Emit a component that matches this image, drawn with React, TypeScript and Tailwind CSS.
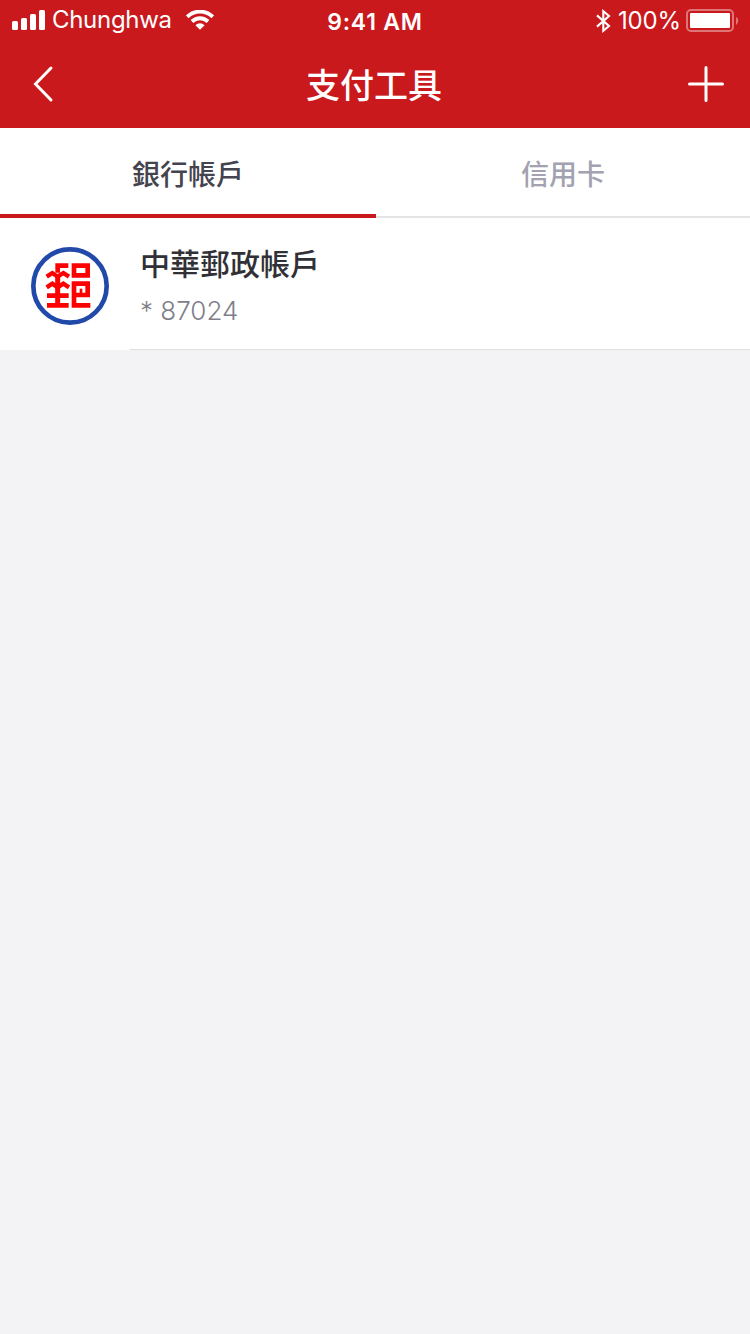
import React from "react";

function Signal() {
  return (
    <svg width="34" height="20" viewBox="0 0 34 20" fill="#fff" className="shrink-0">
      <rect x="0" y="11" width="6" height="9" rx="1.5" />
      <rect x="9" y="8" width="6" height="12" rx="1.5" />
      <rect x="18" y="4" width="6" height="16" rx="1.5" />
      <rect x="27" y="0" width="6" height="20" rx="1.5" />
    </svg>
  );
}

function Wifi() {
  return (
    <svg width="28" height="20" viewBox="0 0 28 20" className="shrink-0">
      <g fill="none" stroke="#fff" strokeWidth="3.9">
        <path d="M1.3 6.8A18.2 18.2 0 0 1 26.7 6.8" />
        <path d="M6 11.5A11.5 11.5 0 0 1 22 11.5" />
      </g>
      <path d="M9.4 15.2a6.6 6.6 0 0 1 9.2 0L14 19.8Z" fill="#fff" />
    </svg>
  );
}

function Bluetooth() {
  return (
    <svg width="16" height="24" viewBox="0 0 16 24" fill="none" stroke="#fff" strokeWidth="2.1" className="shrink-0">
      <path d="M2 6.4 14 17 8.3 21.8V2.2l5.7 4.8L2 17.6" />
    </svg>
  );
}

function Battery() {
  return (
    <svg width="54" height="24" viewBox="0 0 54 24" className="shrink-0">
      <rect x="1" y="1" width="46" height="21" rx="4" fill="none" stroke="#fff" strokeOpacity=".4" strokeWidth="2" />
      <rect x="4" y="4" width="40" height="15" rx="1" fill="#fff" />
      <path d="M50 8c3 1 3 6 0 8Z" fill="#fff" fillOpacity=".4" />
    </svg>
  );
}

function PostLogo() {
  return (
    <svg width="80" height="80" viewBox="30 30 240 240" className="shrink-0">
      <circle cx="150" cy="150" r="110" fill="#fff" stroke="#2149a9" strokeWidth="14" />
      <g fill="none" stroke="#f00" strokeWidth="14">
        <path d="M145 89H113V110" />
        <path d="M80 122 97 111 113 122 130 111 147 122" strokeWidth="13" />
        <path d="M80 154 97 143 113 154 130 143 147 154" strokeWidth="13" />
        <path d="M113 118V208" strokeWidth="15" />
        <path d="M81 179H146M81 208H146" />
        <path d="M162 89H203V118H162Z" />
        <path d="M211 208H162V143H203V177H162" />
        <path d="M183 158V177" strokeWidth="8" />
      </g>
    </svg>
  );
}

export default function App() {
  return (
    <div className="flex h-[1334px] w-[750px] flex-col overflow-hidden bg-[#f3f3f5] font-['Inter','Noto_Sans_CJK_TC',sans-serif]">
      <header className="h-32 bg-[#c9191d] text-white">
        <div className="grid h-10 grid-cols-3 items-center pt-px">
          <div className="flex items-center pb-[2px] pl-3">
            <Signal />
            <span className="ml-[6px] w-[134px] text-[24px] leading-[38px] tracking-[-0.3px]">Chunghwa</span>
            <Wifi />
          </div>
          <span className="pt-px text-center text-[23px] font-semibold leading-[38px] tracking-[0.8px]">9:41 AM</span>
          <div className="flex items-center justify-end pr-[10px]">
            <Bluetooth />
            <span className="ml-[7px] w-[68px] text-[24px] leading-10 tracking-[-0.2px]">100%</span>
            <Battery />
          </div>
        </div>
        <div className="grid h-22 grid-cols-[1fr_auto_1fr] items-center pl-8 pr-[26px]">
          <svg width="36" height="40" viewBox="0 0 36 40" fill="none" stroke="#fff" strokeWidth="3" strokeLinecap="round">
            <path d="M19 4 3.5 20 19 36" />
          </svg>
          <h1 className="-ml-2 pt-[4px] text-[34px] font-medium leading-[50px]">支付工具</h1>
          <svg width="36" height="36" viewBox="0 0 36 36" stroke="#fff" strokeWidth="3" strokeLinecap="round" className="justify-self-end">
            <path d="M18 1.5V34.5M1.5 18H34.5" />
          </svg>
        </div>
      </header>

      <nav className="flex h-[90px] bg-white text-[28px] font-medium">
        <button className="w-[376px] border-b-4 border-[#c9191d] pt-2 text-[#44444f]">銀行帳戶</button>
        <button className="flex-1 border-b-2 border-[#e4e4e4] pt-[6px] text-[#a2a2b0]">信用卡</button>
      </nav>

      <div className="flex h-[132px] bg-white">
        <div className="w-[130px] pl-[30px] pt-[28px]">
          <PostLogo />
        </div>
        <div className="flex-1 border-b border-[#e0e0e3] pl-[10px] pt-6">
          <div className="text-[30px] font-medium leading-[44px] text-[#303036]">中華郵政帳戶</div>
          <div className="mt-[3px] text-[26px] font-light leading-[44px] text-[#7f7f8b]">* 87024</div>
        </div>
      </div>
    </div>
  );
}
